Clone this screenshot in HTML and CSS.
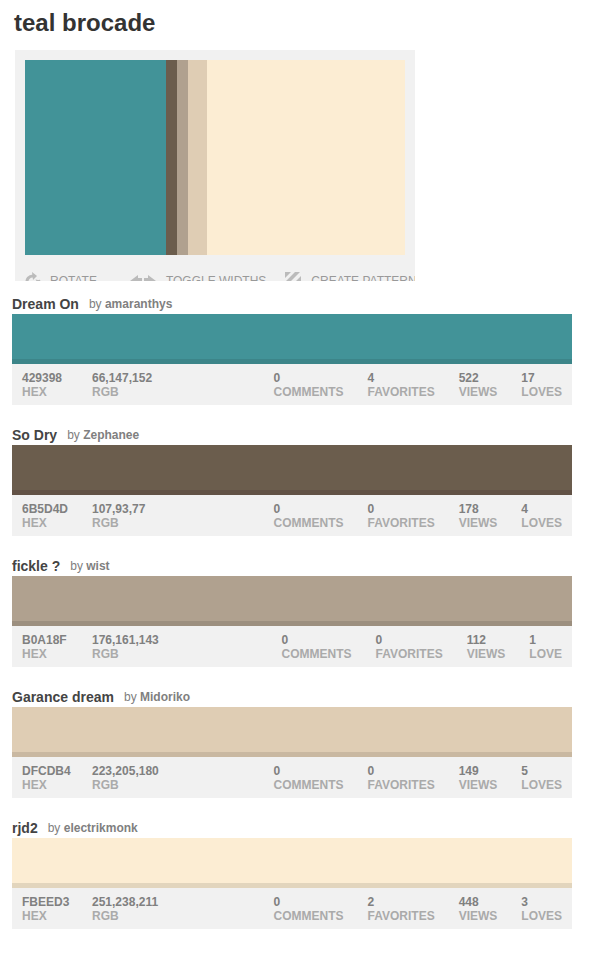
FILE: index.html
```
<!DOCTYPE html>
<html lang="en">
<head>
<meta charset="utf-8">
<title>teal brocade</title>
<link rel="stylesheet" href="styles.css">
</head>
<body>
<main>
  <h1>teal brocade</h1>
  <section class="palette">
    <div class="stripes">
      <div class="stripe dream"></div>
      <div class="stripe dry"></div>
      <div class="stripe fickle"></div>
      <div class="stripe garance"></div>
      <div class="stripe rjd"></div>
    </div>
    <div class="tools">
      <button type="button" class="tool rotate"><svg width="16" height="18" viewBox="0 0 16 18" fill="none" stroke="#bbb" stroke-width="3"><path d="M2 11C1.500 7 4 4 8 4M13.500 8Q15 14 8 15.500"/><path d="M7 0l5 4-4 4z" fill="#bbb" stroke="none"/><path d="M10.500 7.500l5 1-2.500 3z" fill="#bbb" stroke="none"/></svg>ROTATE</button>
      <button type="button" class="tool toggle"><svg width="27" height="18" viewBox="0 0 27 18" fill="#bbb"><path d="M0 9l8-6v3h4v6H8v3zM26 9l-8-6v3h-4v6h4v3z"/></svg>TOGGLE WIDTHS</button>
      <button type="button" class="tool pattern"><svg width="16" height="18" viewBox="0 0 16 18" fill="#bbb"><path d="M0 0h6L0 6zM10 0h5L0 15V10zM16 4v5l-7 7H4z"/></svg>CREATE PATTERN</button>
    </div>
  </section>
  <section class="colors">
    <article>
      <header><h2><a href="#">Dream On</a></h2><p>by <a href="#">amaranthys</a></p></header>
      <div class="swatch dream"></div>
      <div class="info">
        <dl class="values"><div><dt>HEX</dt><dd>429398</dd></div><div><dt>RGB</dt><dd>66,147,152</dd></div></dl>
        <dl class="stats"><div><dt>COMMENTS</dt><dd>0</dd></div><div><dt>FAVORITES</dt><dd>4</dd></div><div><dt>VIEWS</dt><dd>522</dd></div><div><dt>LOVES</dt><dd>17</dd></div></dl>
      </div>
    </article>
    <article>
      <header><h2><a href="#">So Dry</a></h2><p>by <a href="#">Zephanee</a></p></header>
      <div class="swatch dry"></div>
      <div class="info">
        <dl class="values"><div><dt>HEX</dt><dd>6B5D4D</dd></div><div><dt>RGB</dt><dd>107,93,77</dd></div></dl>
        <dl class="stats"><div><dt>COMMENTS</dt><dd>0</dd></div><div><dt>FAVORITES</dt><dd>0</dd></div><div><dt>VIEWS</dt><dd>178</dd></div><div><dt>LOVES</dt><dd>4</dd></div></dl>
      </div>
    </article>
    <article>
      <header><h2><a href="#">fickle ?</a></h2><p>by <a href="#">wist</a></p></header>
      <div class="swatch fickle"></div>
      <div class="info">
        <dl class="values"><div><dt>HEX</dt><dd>B0A18F</dd></div><div><dt>RGB</dt><dd>176,161,143</dd></div></dl>
        <dl class="stats"><div><dt>COMMENTS</dt><dd>0</dd></div><div><dt>FAVORITES</dt><dd>0</dd></div><div><dt>VIEWS</dt><dd>112</dd></div><div><dt>LOVE</dt><dd>1</dd></div></dl>
      </div>
    </article>
    <article>
      <header><h2><a href="#">Garance dream</a></h2><p>by <a href="#">Midoriko</a></p></header>
      <div class="swatch garance"></div>
      <div class="info">
        <dl class="values"><div><dt>HEX</dt><dd>DFCDB4</dd></div><div><dt>RGB</dt><dd>223,205,180</dd></div></dl>
        <dl class="stats"><div><dt>COMMENTS</dt><dd>0</dd></div><div><dt>FAVORITES</dt><dd>0</dd></div><div><dt>VIEWS</dt><dd>149</dd></div><div><dt>LOVES</dt><dd>5</dd></div></dl>
      </div>
    </article>
    <article>
      <header><h2><a href="#">rjd2</a></h2><p>by <a href="#">electrikmonk</a></p></header>
      <div class="swatch rjd"></div>
      <div class="info">
        <dl class="values"><div><dt>HEX</dt><dd>FBEED3</dd></div><div><dt>RGB</dt><dd>251,238,211</dd></div></dl>
        <dl class="stats"><div><dt>COMMENTS</dt><dd>0</dd></div><div><dt>FAVORITES</dt><dd>2</dd></div><div><dt>VIEWS</dt><dd>448</dd></div><div><dt>LOVES</dt><dd>3</dd></div></dl>
      </div>
    </article>
  </section>
</main>
</body>
</html>
```
FILE: styles.css
```
* { box-sizing: border-box; }
body, h1, h2, p, dl, dd { margin: 0; }
body {
  background: #fff;
  color: #808080;
  font: 12px/14px "Liberation Sans", Arial, sans-serif;
}
main { padding: 8px 25px 25px 12px; }
a { color: inherit; font-weight: bold; text-decoration: none; }
h1 {
  margin: 0 0 12px 2px;
  color: #333;
  font-size: 24px;
  line-height: 30px;
}

.palette {
  max-width: 400px;
  height: 231px;
  margin-left: 3px;
  padding: 10px;
  overflow: hidden;
  background: #f1f1f1;
}
.stripes { display: flex; height: 195px; }
.stripe.dream { flex: 141; }
.stripe.dry { flex: 11; }
.stripe.fickle { flex: 11; }
.stripe.garance { flex: 19; }
.stripe.rjd { flex: 198; }

.dream { background: #429398; border-color: #3c8589; }
.dry { background: #6b5d4d; border-color: #625246; }
.fickle { background: #b0a18f; border-color: #9c8f7f; }
.garance { background: #dfcdb4; border-color: #c9b8a1; }
.rjd { background: #fcedd3; border-color: #e2d5bd; }

.tools { display: flex; padding-top: 17px; }
.tool {
  display: flex;
  flex: none;
  align-items: center;
  padding: 0;
  border: 0;
  background: none;
  color: #999;
  font: inherit;
  white-space: nowrap;
  cursor: pointer;
}
.tool svg { flex: none; }
.rotate { gap: 9px; margin-right: 33px; }
.toggle { gap: 9px; margin-right: 19px; }
.pattern { gap: 10px; }

.colors { display: grid; gap: 20px; margin-top: 13px; }
header { display: flex; gap: 10px; height: 20px; align-items: center; }
h2 { color: #444; font-size: 14px; line-height: 20px; }
.swatch { height: 50px; border-bottom-width: 5px; border-bottom-style: solid; }
.info {
  display: flex;
  justify-content: space-between;
  padding: 7px 10px 6px;
  background: #f1f1f1;
  font-weight: bold;
}
.values, .stats { display: flex; }
.values > div { width: 70px; }
.stats { gap: 24px; }
dl > div { display: flex; flex-direction: column-reverse; }
dt { color: #aaa; }
```
